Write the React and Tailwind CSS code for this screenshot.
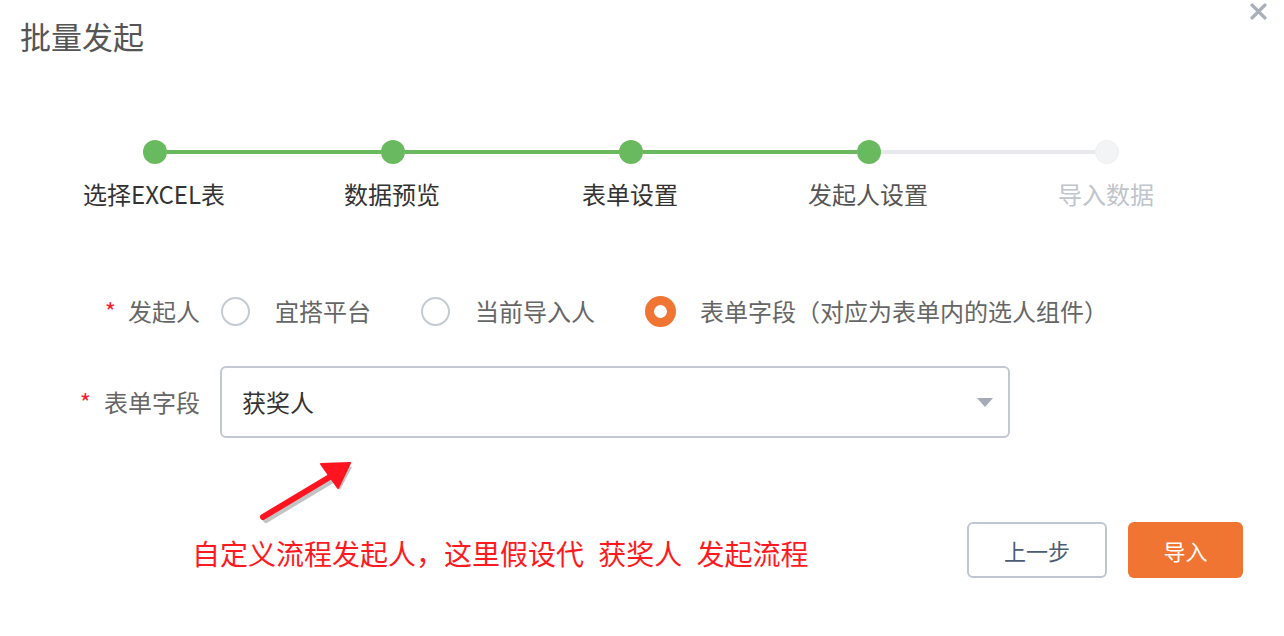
import React from "react";

const FONT = { fontFamily: '"Noto Sans CJK SC", "Noto Sans", sans-serif' };

function Radio({ checked, label }) {
  return (
    <div className={`flex items-center ${checked ? "gap-[24px]" : "gap-[25px]"}`}>
      {checked ? (
        <span className="box-border block w-[31px] h-[31px] rounded-full border-[9px] border-[#f07533] bg-white" />
      ) : (
        <span className="box-border block w-[29px] h-[29px] rounded-full border-2 border-[#c5cbd5] bg-white" />
      )}
      <span className="text-[24px] leading-[34px] text-[#666666]">{label}</span>
    </div>
  );
}

function Label({ children, gap }) {
  return (
    <div className={`w-[200px] shrink-0 flex items-center justify-end ${gap}`}>
      <span className="text-[24px] leading-[34px] text-[#f5222d]">*</span>
      <span className="text-[24px] leading-[34px] text-[#666666]">{children}</span>
    </div>
  );
}

const steps = [
  { label: "选择EXCEL表", color: "text-[#333333]" },
  { label: "数据预览", color: "text-[#333333]" },
  { label: "表单设置", color: "text-[#333333]" },
  { label: "发起人设置", color: "text-[#555555]" },
  { label: "导入数据", color: "text-[#c0c4cc]" },
];

export default function App() {
  return (
    <div className="relative w-[1284px] h-[636px] bg-white overflow-hidden" style={FONT}>
      {/* header */}
      <div className="h-[72px] flex items-start justify-between">
        <h1 className="pl-[20px] pt-[14px] text-[31px] leading-[44px] text-[#555555] font-normal">批量发起</h1>
        <button className="mt-[3px] mr-[17px] w-[17px] h-[17px]">
          <svg viewBox="0 0 16 16" width="17" height="17">
            <path d="M2 2 L14 14 M14 2 L2 14" stroke="#a9afba" strokeWidth="3.2" strokeLinecap="round" />
          </svg>
        </button>
      </div>

      {/* steps */}
      <div className="mt-[68px] ml-[143px] w-[976px] flex items-center">
        <span className="w-[24px] h-[24px] rounded-full bg-[#69ba5e] shrink-0" />
        <span className="flex-1 h-[4px] bg-[#69ba5e]" />
        <span className="w-[24px] h-[24px] rounded-full bg-[#69ba5e] shrink-0" />
        <span className="flex-1 h-[4px] bg-[#69ba5e]" />
        <span className="w-[24px] h-[24px] rounded-full bg-[#69ba5e] shrink-0" />
        <span className="flex-1 h-[4px] bg-[#69ba5e]" />
        <span className="w-[24px] h-[24px] rounded-full bg-[#69ba5e] shrink-0" />
        <span className="flex-1 h-[4px] bg-[#e7e9ed]" />
        <span className="box-border w-[24px] h-[24px] rounded-full bg-[#f3f4f6] border border-[#eceef1] shrink-0" />
      </div>
      <div className="mt-[13px] ml-[35px] flex">
        {steps.map((s) => (
          <div key={s.label} className={`w-[238px] text-center text-[24px] leading-[34px] ${s.color}`}>
            {s.label}
          </div>
        ))}
      </div>

      {/* initiator row */}
      <div className="mt-[83px] flex items-center">
        <Label gap="gap-[12px]">发起人</Label>
        <div className="ml-[21px] flex items-center gap-[50px]">
          <Radio label="宜搭平台" />
          <Radio label="当前导入人" />
          <Radio checked label="表单字段（对应为表单内的选人组件）" />
        </div>
      </div>

      {/* form field row */}
      <div className="mt-[38px] flex items-center">
        <Label gap="gap-[13px]">表单字段</Label>
        <div className="ml-[20px] w-[790px] h-[72px] box-border border-2 border-[#c3c8d2] rounded-[6px] flex items-center justify-between pl-[20px] pr-[15px]">
          <span className="text-[24px] leading-[34px] text-[#333333]">获奖人</span>
          <svg width="16" height="9" viewBox="0 0 16 9">
            <path d="M0 0 H16 L8 9 Z" fill="#a4abb7" />
          </svg>
        </div>
      </div>

      {/* bottom row */}
      <div className="mt-[84px] flex items-center">
        <span className="ml-[192px] mt-[6px] text-[28px] leading-[40px] text-[#ff1a22] [word-spacing:8px]">
          自定义流程发起人，这里假设代 获奖人 发起流程
        </span>
        <div className="ml-auto mr-[41px] flex items-center gap-[21px]">
          <button className="box-border w-[140px] h-[56px] border-2 border-[#c0c6d1] rounded-[6px] bg-white text-[22px] text-[#4b5d75]">
            上一步
          </button>
          <button className="w-[115px] h-[56px] rounded-[6px] bg-[#f07533] text-[22px] text-white">
            导入
          </button>
        </div>
      </div>

      {/* annotation arrow */}
      <svg className="absolute left-[250px] top-[455px]" width="110" height="75" viewBox="250 455 110 75">
        <g transform="translate(3,3)" opacity="0.35">
          <path d="M263 517 L338 472" stroke="#555" strokeWidth="6" strokeLinecap="round" fill="none" />
          <path d="M349 464 L322 465 L337 487 Z" fill="#555" />
        </g>
        <path d="M263 517 L338 472" stroke="#ff1420" strokeWidth="6" strokeLinecap="round" fill="none" />
        <path d="M350 463 L321 464 L338 488 Z" fill="#ff1420" stroke="#ff1420" strokeWidth="2" strokeLinejoin="round" />
      </svg>
    </div>
  );
}
